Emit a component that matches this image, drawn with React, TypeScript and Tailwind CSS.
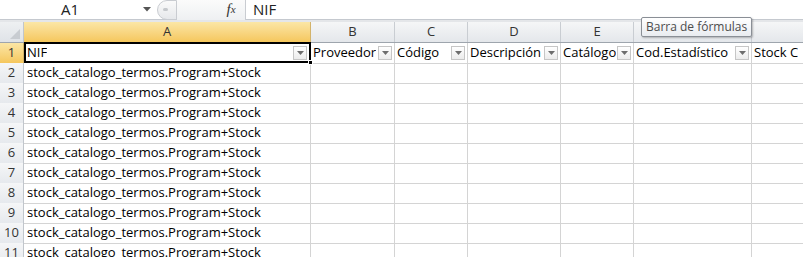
import React from "react";

const COLS = ["A", "B", "C", "D", "E", "F", "G"];
const HEADERS = ["NIF", "Proveedor", "Código", "Descripción", "Catálogo", "Cod.Estadístico", "Stock C"];
const ROW_VALUE = "stock_catalogo_termos.Program+Stock";
const GRID = "grid grid-cols-[24px_287px_84px_73px_93px_73px_118px_118px]";

const FilterButton = () => (
  <div className="w-[14px] h-[14px] shrink-0 border border-[#c6c6c6] bg-gradient-to-b from-white to-[#ececec] flex items-center justify-center">
    <svg width="7" height="4" viewBox="0 0 7 4">
      <path d="M0 0 L7 0 L3.5 4 Z" fill="#6d6d6d" />
    </svg>
  </div>
);

const FormulaBar = () => (
  <div className="flex h-[20px] items-center bg-white border-b border-[#c5c9cf]">
    <div className="w-[140px] text-center text-[15px] text-[#222]">A1</div>
    <svg width="8" height="5" viewBox="0 0 8 5" className="ml-[3px]">
      <path d="M0 0 L8 0 L4 4.5 Z" fill="#555" />
    </svg>
    <div className="ml-[6px] w-[20px] h-[20px] rounded-l-full border border-[#c9ccd1] bg-gradient-to-b from-[#fafafa] to-[#e6e8eb] flex items-center pl-[5px]">
      <div className="w-[5px] h-[3px] rounded-full bg-[#c5c8cc]" />
    </div>
    <div className="w-[40px] h-[20px] bg-gradient-to-b from-[#fbfbfb] to-[#eef0f2]" />
    <div className="w-[28px] h-[20px] flex items-center justify-center bg-gradient-to-b from-[#fbfbfb] to-[#eef0f2] font-['Liberation_Serif',serif] italic text-[15px] text-[#333]">
      f<span className="text-[11px]">x</span>
    </div>
    <div className="h-[20px] w-px bg-[#c9ccd1]" />
    <div className="pl-[7px] text-[15px] text-[#222]">NIF</div>
  </div>
);

export default function App() {
  const rows = Array.from({ length: 10 }, (_, i) => i + 2);

  return (
    <div className="relative w-[803px] h-[257px] overflow-hidden bg-white font-['Open_Sans','Liberation_Sans',sans-serif] text-[13px] text-black">
      <FormulaBar />
      <div className="h-[2px] bg-[#e4e6e9]" />

      {/* column headers */}
      <div className={`${GRID} h-[21px] border-b border-[#9ea5ad]`}>
        <div className="bg-gradient-to-b from-[#eef0f2] to-[#dfe3e8] border-r border-[#c1c6cc] flex items-end justify-end p-[3px]">
          <svg width="10" height="10" viewBox="0 0 10 10">
            <path d="M10 0 L10 10 L0 10 Z" fill="#c8ccd1" />
          </svg>
        </div>
        {COLS.map((c, i) => (
          <div
            key={c}
            className={
              i === 0
                ? "bg-gradient-to-b from-[#fbe6a5] to-[#f5c75c] border-r border-[#d3b36b] flex items-center justify-center text-[#333]"
                : "bg-gradient-to-b from-[#f5f6f7] to-[#e4e7eb] border-r border-[#c9cdd2] flex items-center justify-center text-[#333]"
            }
          >
            {c}
          </div>
        ))}
      </div>

      {/* row 1 */}
      <div className={`${GRID} h-[20px]`}>
        <div className="bg-gradient-to-b from-[#fbe6a5] to-[#f5c75c] border-r border-b border-[#d3b36b] flex items-center justify-center text-[#333]">
          1
        </div>
        {HEADERS.map((h, i) => (
          <div
            key={h}
            className={
              i === 0
                ? "relative border-2 border-black -mt-px h-[21px] flex items-center justify-between pl-px pr-[2px] whitespace-nowrap overflow-visible"
                : "border-r border-b border-[#d4d4d4] flex items-center justify-between pl-[2px] pr-[2px] whitespace-nowrap overflow-hidden"
            }
          >
            <span className="overflow-hidden">{h}</span>
            {i < 6 && <FilterButton />}
            {i === 0 && <div className="absolute -right-[4px] -bottom-[4px] w-[5px] h-[5px] bg-black border border-white" />}
          </div>
        ))}
      </div>

      {rows.map((r) => (
        <div key={r} className={`${GRID} h-[20px]`}>
          <div className="bg-gradient-to-b from-[#f5f6f7] to-[#e6e9ed] border-r border-b border-[#c1c6cc] flex items-center justify-center text-[#333]">
            {r}
          </div>
          {COLS.map((c, i) => (
            <div key={c} className="border-r border-b border-[#d4d4d4] flex items-center pl-[3px] whitespace-nowrap">
              {i === 0 ? ROW_VALUE : ""}
            </div>
          ))}
        </div>
      ))}

      {/* tooltip */}
      <div className="absolute left-[641px] top-[17px] px-[4px] h-[20px] flex items-center bg-gradient-to-b from-white to-[#e9ecf0] border border-[#8a8f96] rounded-[2px] shadow-[1px_1px_2px_rgba(0,0,0,0.25)] text-[12px] text-[#4c4c4c]">
        Barra de fórmulas
      </div>
    </div>
  );
}
